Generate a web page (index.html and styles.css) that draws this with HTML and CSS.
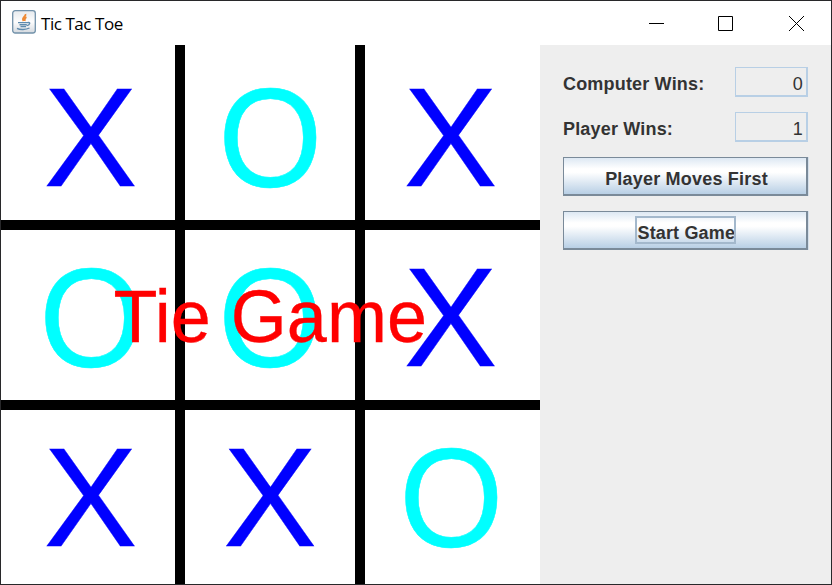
FILE: index.html
```html
<!DOCTYPE html>
<html lang="en">
<head>
<meta charset="utf-8">
<title>Tic Tac Toe</title>
<link rel="stylesheet" href="styles.css">
</head>
<body>
<div class="window">
  <header class="titlebar">
    <svg class="app-icon" viewBox="0 0 24 24" width="24" height="24">
      <defs><linearGradient id="g" x1="0" y1="0" x2="0" y2="1"><stop offset="0" stop-color="#e6eaee"/><stop offset=".5" stop-color="#fdfdfd"/><stop offset="1" stop-color="#d4d9df"/></linearGradient></defs>
      <rect x=".7" y=".7" width="22.600" height="22.300" rx="2.500" fill="url(#g)" stroke="#7191a9" stroke-width="1.300"/>
      <path d="M13.500 4c1 2.500-4.500 3.500-2 7M14.500 7.200c-2.500 1-1.500 2.300-1.800 3.800" fill="none" stroke="#ee8a35" stroke-width="1.800"/>
      <path d="M6 12.600h10M15.500 12.600c3.500-.8 2.500 2.700-.8 3M7.500 14.700h7.300M8.500 16.600h5.500M5 18.300c3 1.800 9 1.500 12.500-.3" fill="none" stroke="#5f8bad" stroke-width="1.400"/>
    </svg>
    <h1 class="title">Tic Tac Toe</h1>
    <svg class="controls" width="180" height="43" viewBox="0 0 180 43" fill="none" stroke="#000">
      <path d="M0 21.500h15M69.500 14.500h14v14h-14zM140 14l15 15M155 14l-15 15"/>
    </svg>
  </header>
  <main class="content">
    <section class="board">
      <div class="cell x">X</div><div class="cell o"><span>O</span></div><div class="cell x">X</div>
      <div class="cell o"><span>O</span></div><div class="cell o"><span>O</span></div><div class="cell x">X</div>
      <div class="cell x">X</div><div class="cell x">X</div><div class="cell o"><span>O</span></div>
      <div class="result">Tie Game</div>
    </section>
    <aside class="panel">
      <div class="score"><span class="label">Computer Wins:</span><output class="value">0</output></div>
      <div class="score"><span class="label">Player Wins:</span><output class="value">1</output></div>
      <button class="btn first">Player Moves First</button>
      <button class="btn"><span class="focus">Start Game</span></button>
    </aside>
  </main>
</div>
</body>
</html>
```
FILE: styles.css
```css
* { box-sizing: border-box; }
body { margin: 0; font-family: "Liberation Sans", Arial, sans-serif; }
.window { width: 832px; height: 585px; border: 1px solid #28282a; background: #fff; overflow: hidden; }
.titlebar { height: 44px; display: flex; align-items: center; padding-left: 11px; }
.app-icon { margin-bottom: 2px; }
.title { margin: 0 auto 0 5px; font: 17px "Open Sans", sans-serif; letter-spacing: -0.45px; }
.controls { margin-right: 2px; }
.content { display: flex; height: 539px; }

.board { position: relative; width: 539px; height: 539px; display: grid; grid-template-columns: 174px 170px 175px; grid-template-rows: 175px 170px 174px; gap: 10px; background: #000; }
.cell { background: #fff; display: flex; justify-content: center; font-size: 141px; line-height: 175px; overflow: hidden; }
.cell:nth-child(-n+3) { line-height: 185px; }
.cell:nth-child(3n+1) { padding-left: 5px; }
.cell:nth-child(3n) { padding-right: 4px; }
.x { color: #00f; -webkit-text-stroke: 0.3px #00f; }
.o { color: #0ff; -webkit-text-stroke: 0.5px #0ff; }
.o span { transform: translate(0.5px, 0.5px) scaleX(0.95); }
.result { position: absolute; left: 112.5px; top: 229.5px; font-size: 72px; line-height: 84px; color: #f00; white-space: nowrap; transform: scaleY(1.03); transform-origin: 0 67px; -webkit-text-stroke: 0.3px #f00; }

.panel { flex: 1; background: #eee; padding: 22px 22px 0 23px; color: #333; font-size: 18px; font-weight: bold; letter-spacing: 0.18px; }
.score { display: flex; justify-content: space-between; align-items: center; width: 245px; height: 30px; margin-bottom: 15px; }
.label { padding-top: 5px; }
.value { width: 73px; height: 30px; border: solid #b8cfe5; border-width: 1px 2px 2px 1px; text-align: right; padding: 5px 3px 0 0; font-weight: normal; line-height: 22px; }
.btn { display: flex; width: 245px; height: 39px; justify-content: center; align-items: center; border: solid #7a8a99; border-width: 1px 2px 2px 1px; margin: 0 0 15px; padding: 0; font: inherit; letter-spacing: 0.2px; color: #333; background: linear-gradient(#dde8f3, #fff 30%, #fff 40%, #b8cfe5); box-shadow: 1px 0 #d5e0eb; }
.first { padding: 7px 0 0 3px; }
.focus { display: block; width: 101px; height: 28px; border: 2px solid #a3b8cc; padding: 4px 0 0 1px; line-height: 22px; letter-spacing: 0.15px; text-align: left; white-space: nowrap; overflow: hidden; }
```
